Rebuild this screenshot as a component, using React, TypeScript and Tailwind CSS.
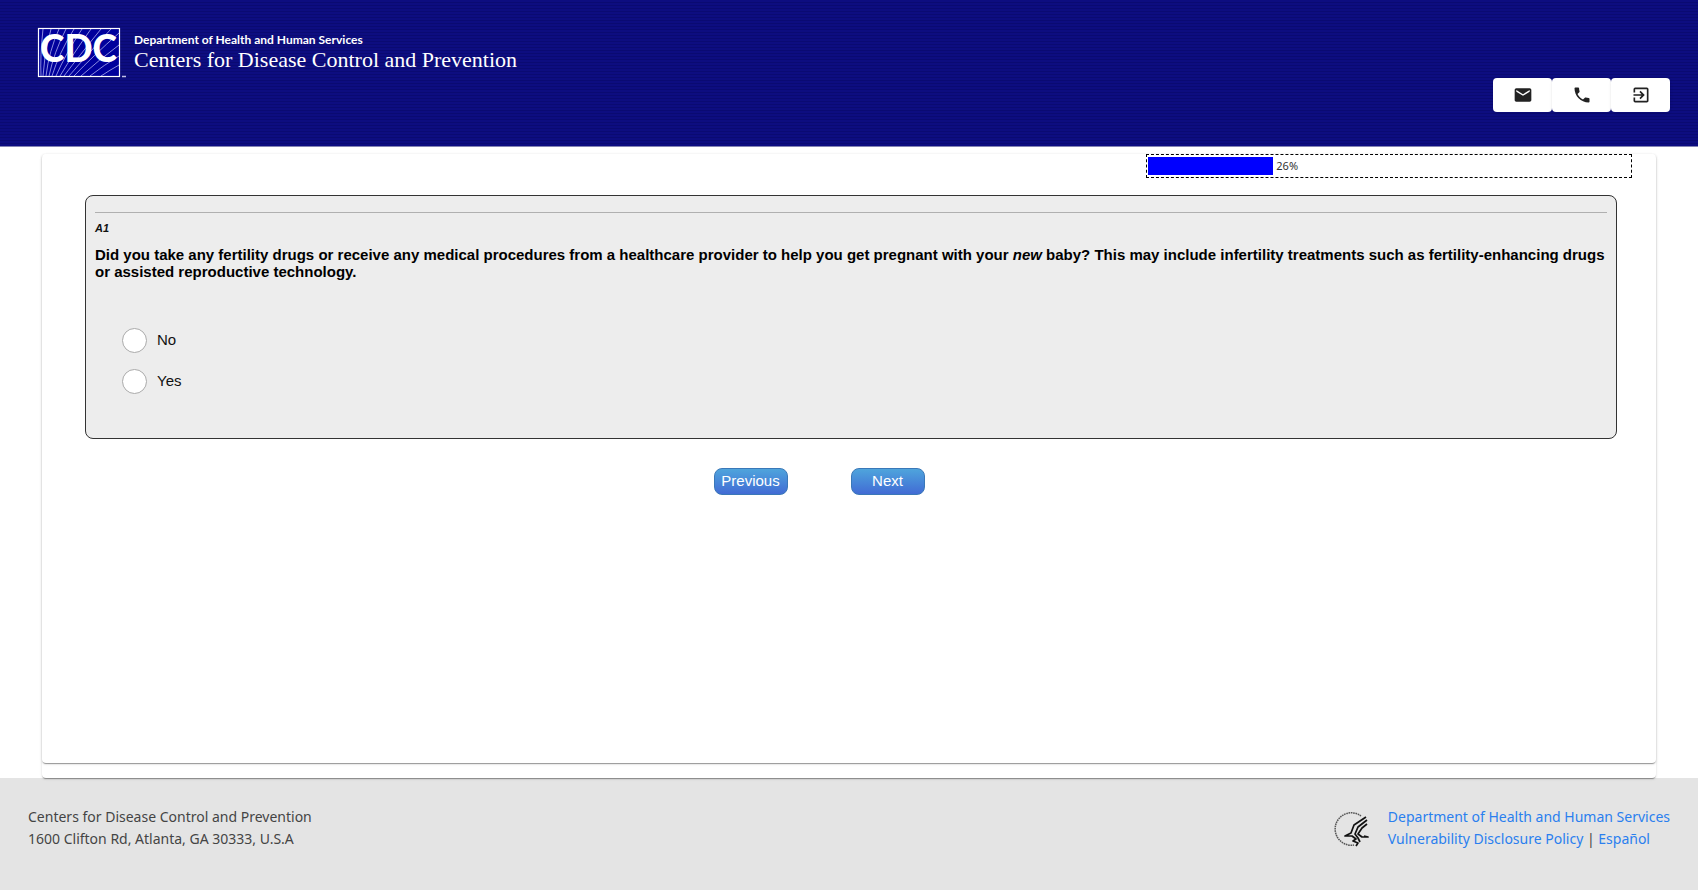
import React, { useState } from 'react';
import { MdEmail, MdExitToApp, MdPhone } from 'react-icons/md';

const options = ['No', 'Yes'];

const navItems = [
  { label: 'Email', icon: MdEmail },
  { label: 'Phone', icon: MdPhone },
  { label: 'Exit', icon: MdExitToApp },
];

const CdcLogo: React.FC = () => (
  <svg width="90" height="52" viewBox="0 0 90 52" className="overflow-visible" role="img" aria-label="CDC">
    <rect x="1.5" y="1.5" width="81" height="48" fill="#00009c" />
    <g stroke="#9a9ae6" strokeWidth="0.9" fill="none">
      <path d="M4 49Q3 30 6 2M6 49Q7 25 14 2M9 49Q12 24 22 2M12 49Q17 25 29 2M15 49Q22 26 37 2M19 49Q28 28 45 2" />
      <path d="M23 49Q36 27 54 2M27 49Q42 29 64 2M32 49Q50 28 74 2M37 49Q56 29 82 6M44 49Q62 33 82 18M53 49Q67 38 82 29M64 49Q73 43 82 38" />
    </g>
    <rect x="1.5" y="1.5" width="81" height="48" fill="none" stroke="#fff" strokeWidth="1.2" />
    <text x="3" y="35" fontFamily="Lato, sans-serif" fontWeight="900" fontSize="37" fill="#fff">CDC</text>
    <path d="M85 49.500h4" stroke="#c0c0e8" strokeWidth="1.5" />
  </svg>
);

const HhsLogo: React.FC = () => (
  <svg width="36" height="36" viewBox="0 0 36 36" fill="none" aria-hidden="true">
    <path d="M27 5A16.2 16.2 0 1 0 20 34" stroke="#555" strokeWidth="1.5" strokeDasharray="1.6 0.7" />
    <g stroke="#111" strokeWidth="1.7" strokeLinejoin="round">
      <path d="M32 6 20 14 17 22 11 25h7l4 3-3 2 5 2-2 3" />
      <path d="M33 9 24 16 21 23l3 4 2 4" />
      <path d="M33 13 28 17 24 23l4 3h6l-4-1" />
    </g>
  </svg>
);

const ProgressBar: React.FC<{ value: number }> = ({ value }) => (
  <div
    role="progressbar"
    aria-valuenow={value}
    className="mr-6 flex h-6 w-[486px] items-center self-end border border-dashed border-black p-px text-[11px] text-[#333]"
  >
    <div className="flex h-[18px] w-full items-center gap-[3px]">
      <div className="h-full bg-[#0000ff]" style={{ width: `${value}%` }} />
      <span className="font-['Noto_Sans',sans-serif]">{value}%</span>
    </div>
  </div>
);

const App: React.FC = () => {
  const [answer, setAnswer] = useState('');

  return (
    <div className="flex min-h-screen flex-col bg-white">
      {/* Header */}
      <header className="flex h-[147px] justify-between border-b border-[#8484b4] bg-[repeating-linear-gradient(#0d0d80_0_2px,#0a0a72_2px_3px)] pt-[27px] pr-7 pl-[37px] text-white">
        <div className="flex items-start gap-[7px]">
          <CdcLogo />
          <div className="pt-[5px]">
            <p className="font-[Lato,sans-serif] text-[12px] leading-4 font-bold">Department of Health and Human Services</p>
            <p className="font-['Liberation_Serif',serif] text-[22px] leading-6">Centers for Disease Control and Prevention</p>
          </div>
        </div>
        <nav className="mt-[51px] flex">
          {navItems.map(({ label, icon: Icon }) => (
            <button
              key={label}
              aria-label={label}
              className="flex h-[34px] w-[59px] items-center justify-center rounded bg-white text-[#222] shadow"
            >
              <Icon className="h-5 w-5" />
            </button>
          ))}
        </nav>
      </header>

      {/* Survey */}
      <main className="relative z-10 mx-[42px] mt-[7px] flex flex-1 flex-col rounded pb-[15px] shadow-[0_2px_1px_-1px_rgba(0,0,0,0.25),0_1px_1px_rgba(0,0,0,0.14),0_1px_3px_rgba(0,0,0,0.12)]">
        <div className="flex flex-1 flex-col rounded shadow-[0_2px_1px_-1px_rgba(0,0,0,0.25),0_1px_1px_rgba(0,0,0,0.14),0_1px_3px_rgba(0,0,0,0.12)]">
          <ProgressBar value={26} />
          <form
            className="flex flex-col items-center font-['Liberation_Sans',sans-serif]"
            onSubmit={(e) => e.preventDefault()}
          >
            <fieldset className="mt-[17px] mr-[39px] ml-[43px] block h-[244px] self-stretch rounded-lg border border-[#333] bg-[#ededed] px-[9px] pt-4">
              <hr className="border-[#b0b0b0]" />
              <p className="mt-[7px] text-[11px] leading-4 font-bold text-[#111] italic">A1</p>
              <p className="mt-[10px] text-[15px] leading-[17px] font-bold text-black">
                Did you take any fertility drugs or receive any medical procedures from a healthcare provider to help you get
                pregnant with your <em>new</em> baby? This may include infertility treatments such as fertility-enhancing drugs
                or assisted reproductive technology.
              </p>
              <div className="mt-12 ml-[27px] flex flex-col items-start gap-4">
                {options.map((option) => (
                  <label key={option} className="flex h-[25px] items-center gap-[10px] text-[15px] text-[#111]">
                    <input
                      type="radio"
                      name="a1"
                      value={option}
                      checked={answer === option}
                      onChange={() => setAnswer(option)}
                      className="h-[25px] w-[25px] appearance-none rounded-full border border-[#aaa] bg-white checked:border-8 checked:border-blue-600"
                    />
                    {option}
                  </label>
                ))}
              </div>
            </fieldset>
            <div className="mt-[29px] mr-[60px] flex gap-[63px]">
              {['Previous', 'Next'].map((label) => (
                <button
                  key={label}
                  type="button"
                  className="h-[27px] w-[74px] rounded-lg border border-[#3a78b8] bg-linear-to-b from-[#4fa4dc] to-[#426bd4] pb-px text-[15px] text-white"
                >
                  {label}
                </button>
              ))}
            </div>
          </form>
        </div>
      </main>

      {/* Footer */}
      <footer className="flex h-28 justify-between bg-[#e4e4e4] px-7 pt-7 font-['Noto_Sans',sans-serif] text-[14px] leading-[22px] text-[#444]">
        <address className="not-italic">
          Centers for Disease Control and Prevention
          <br />
          1600 Clifton Rd, Atlanta, GA 30333, U.S.A
        </address>
        <div className="flex gap-[18px]">
          <div className="mt-[5px]">
            <HhsLogo />
          </div>
          <p>
            <a href="#hhs" className="text-[#2a7fef]">Department of Health and Human Services</a>
            <br />
            <a href="#policy" className="text-[#2a7fef]">Vulnerability Disclosure Policy</a> |{' '}
            <a href="#es" className="text-[#2a7fef]">Español</a>
          </p>
        </div>
      </footer>
    </div>
  );
};

export default App;
